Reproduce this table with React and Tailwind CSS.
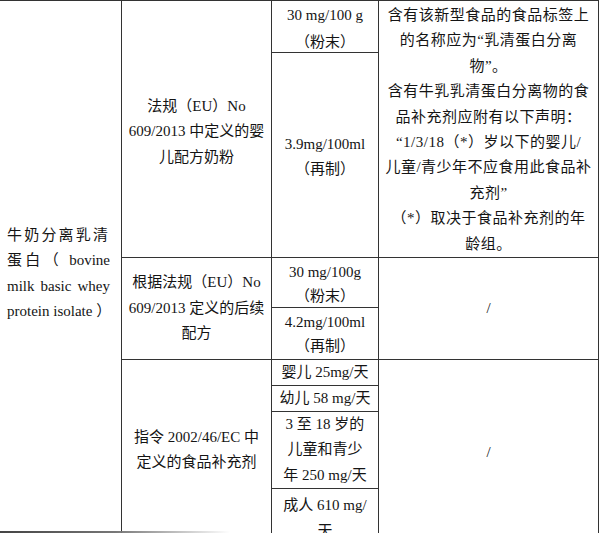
import React from 'react';

const font = { fontFamily: '"Liberation Serif", "Noto Sans CJK SC", serif' };

const Cell = ({ lines, className = '' }) => (
  <div className={`flex flex-col items-center justify-center text-center ${className}`}>
    {lines.map((l, i) => (
      <div key={i} className="whitespace-pre">{l}</div>
    ))}
  </div>
);

const App = () => {
  return (
    <div className="relative w-[600px] h-[533px] overflow-hidden bg-white text-[15px] leading-[25.5px] text-[#141414]" style={font}>
      <div className="flex w-[599px] border-t-[1.5px] border-[#333]">
        {/* colonne 1 */}
        <div className="w-[122px] h-[545px] shrink-0 border-r-[1.5px] border-[#333] flex flex-col justify-center pl-[7px] pr-[11px]">
          <div className="text-justify [text-align-last:justify] tracking-[2px]">牛奶分离乳清</div>
          <div className="text-justify [text-align-last:justify]">蛋白（ bovine</div>
          <div className="text-justify [text-align-last:justify]">milk basic whey</div>
          <div className="text-justify [text-align-last:justify]">protein isolate ）</div>
        </div>

        <div className="flex flex-col flex-1">
          {/* ligne 1 */}
          <div className="flex h-[257px] border-b-[1.5px] border-[#333]">
            <Cell className="w-[150px] shrink-0 border-r-[1.5px] border-[#333] pt-[6px]" lines={['法规（EU）No', '609/2013 中定义的婴', '儿配方奶粉']} />
            <div className="w-[107px] shrink-0 border-r-[1.5px] border-[#333] flex flex-col">
              <Cell className="h-[52px] border-b-[1.5px] border-[#333] justify-start leading-[27px] pt-[1px]" lines={['30 mg/100 g', '（粉末）']} />
              <Cell className="flex-1 pt-[4px]" lines={['3.9mg/100ml', '（再制）']} />
            </div>
            <Cell
              className="w-[220px] shrink-0 border-r-[1.5px] border-[#333] tracking-[0.5px] justify-start leading-[25.4px] pt-[2px]"
              lines={[
                '含有该新型食品的食品标签上',
                '的名称应为“乳清蛋白分离',
                '物”。',
                '含有牛乳乳清蛋白分离物的食',
                '品补充剂应附有以下声明：',
                '“1/3/18（*）岁以下的婴儿/',
                '儿童/青少年不应食用此食品补',
                '充剂”',
                '（*）取决于食品补充剂的年',
                '龄组。',
              ]}
            />
          </div>

          {/* ligne 2 */}
          <div className="flex h-[102px] border-b-[1.5px] border-[#333]">
            <Cell className="w-[150px] shrink-0 border-r-[1.5px] border-[#333]" lines={['根据法规（EU）No', '609/2013 定义的后续', '配方']} />
            <div className="w-[107px] shrink-0 border-r-[1.5px] border-[#333] flex flex-col">
              <Cell className="h-[50px] border-b-[1.5px] border-[#333] leading-[24px] pt-[2px]" lines={['30 mg/100g', '（粉末）']} />
              <Cell className="flex-1 leading-[24px] pt-[1px]" lines={['4.2mg/100ml', '（再制）']} />
            </div>
            <Cell className="w-[220px] shrink-0 border-r-[1.5px] border-[#333]" lines={['/']} />
          </div>

          {/* ligne 3 */}
          <div className="flex flex-1">
            <Cell className="w-[150px] shrink-0 border-r-[1.5px] border-[#333] pb-[6px]" lines={['指令 2002/46/EC 中', '定义的食品补充剂']} />
            <div className="w-[107px] shrink-0 border-r-[1.5px] border-[#333] flex flex-col">
              <Cell className="h-[26px] border-b-[1.5px] border-[#333]" lines={['婴儿 25mg/天']} />
              <Cell className="h-[26px] border-b-[1.5px] border-[#333]" lines={['幼儿 58 mg/天']} />
              <Cell className="h-[77px] border-b-[1.5px] border-[#333]" lines={['3 至 18 岁的', '儿童和青少', '年 250 mg/天']} />
              <Cell className="flex-1 justify-start pt-[3px] leading-[26px]" lines={['成人 610 mg/', '天']} />
            </div>
            <Cell className="w-[220px] shrink-0 border-r-[1.5px] border-[#333]" lines={['/']} />
          </div>
        </div>
      </div>

      {/* ombre du scan en bas à gauche */}
      <div className="absolute left-0 bottom-0 w-[230px] h-[2px] bg-gradient-to-r from-[#444] via-[#777] to-transparent" />
    </div>
  );
};

export default App;
